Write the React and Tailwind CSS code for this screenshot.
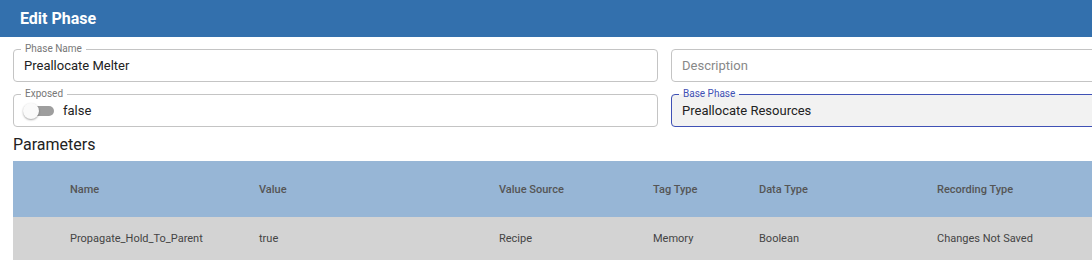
import React from "react";

const columns = [
  { key: "name", label: "Name", w: "w-[189px]" },
  { key: "value", label: "Value", w: "w-[240px]" },
  { key: "source", label: "Value Source", w: "w-[154px]" },
  { key: "tag", label: "Tag Type", w: "w-[106px]" },
  { key: "data", label: "Data Type", w: "w-[178px]" },
  { key: "rec", label: "Recording Type", w: "w-[200px]" },
];

const rows = [
  {
    name: "Propagate_Hold_To_Parent",
    value: "true",
    source: "Recipe",
    tag: "Memory",
    data: "Boolean",
    rec: "Changes Not Saved",
  },
];

function Field({ label, children, active, className = "" }) {
  return (
    <fieldset
      className={`rounded border px-[10px] py-0 ${label ? "h-[38px]" : "mt-[5px] h-[33px]"} ${
        active ? "border-[#3f51b5] bg-[#f2f2f2]" : "border-[#c4c4c4] bg-white"
      } ${className}`}
    >
      {label && (
        <legend
          className={`ml-[-3px] px-[4px] text-[10px] leading-[10px] ${
            active ? "text-[#3f51b5]" : "text-[#777]"
          }`}
        >
          {label}
        </legend>
      )}
      <div className={`flex h-full items-center text-[13px] ${label ? "-mt-[2px]" : ""}`}>
        {children}
      </div>
    </fieldset>
  );
}

export default function App() {
  return (
    <div className="h-[280px] w-[1092px] overflow-hidden bg-white font-['Roboto',sans-serif]">
      {/* Header */}
      <div className="flex h-[37px] items-center bg-[#3370ad] px-[20px]">
        <h1 className="text-[16px] font-bold text-white">Edit Phase</h1>
      </div>

      <div className="w-[1300px] pl-[13px]">
        {/* Form */}
        <div className="mt-[7px] grid grid-cols-[645px_1fr] gap-x-[13px] gap-y-[7px]">
          <Field label="Phase Name">
            <span className="text-[#222]">Preallocate Melter</span>
          </Field>
          <Field>
            <span className="text-[#888]">Description</span>
          </Field>
          <Field label="Exposed">
            <div className="relative ml-[-1px] mr-[8px] h-[16px] w-[32px]">
              <div className="absolute left-[3px] top-[3px] h-[10px] w-[28px] rounded-full bg-[#9e9e9e]" />
              <div className="absolute left-0 top-0 h-[16px] w-[16px] rounded-full bg-[#fafafa] shadow-[0_1px_2px_rgba(0,0,0,0.35)]" />
            </div>
            <span className="text-[#222]">false</span>
          </Field>
          <Field label="Base Phase" active>
            <span className="text-[#222]">Preallocate Resources</span>
          </Field>
        </div>

        {/* Parameters */}
        <h2 className="mt-[8px] text-[16px] leading-[20px] text-[#222]">Parameters</h2>
        <table className="mt-[6px] w-full border-collapse text-[11px]">
          <thead>
            <tr className="h-[56px] bg-[#97b6d6] text-left text-[#555]">
              <th className="w-[57px]" />
              {columns.map((c) => (
                <th key={c.key} className={`${c.w} pt-[3px] font-medium`}>
                  {c.label}
                </th>
              ))}
              <th />
            </tr>
          </thead>
          <tbody>
            {rows.map((r) => (
              <tr key={r.name} className="h-[43px] bg-[#d3d3d3] text-[#444]">
                <td />
                {columns.map((c) => (
                  <td key={c.key} className="pt-[2px]">
                    {r[c.key]}
                  </td>
                ))}
                <td />
              </tr>
            ))}
          </tbody>
        </table>
      </div>
    </div>
  );
}
